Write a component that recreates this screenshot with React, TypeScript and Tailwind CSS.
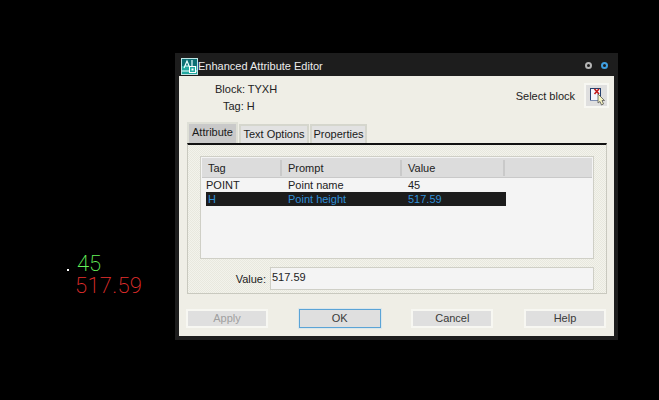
import React from "react";

const hatch =
  "bg-[conic-gradient(#e8e8de_25%,#f3f3ec_0_50%,#e8e8de_0_75%,#f3f3ec_0)] bg-[length:2px_2px]";

function AppIcon() {
  return (
    <svg width="17" height="17" viewBox="0 0 17 17" className="shrink-0">
      <rect x="0.5" y="0.5" width="16" height="16" fill="#22a8a0" stroke="#bfe5e5" />
      <rect x="1" y="1" width="15" height="7" fill="#0c6f74" />
      <path d="M3 10 L6 3 L9 10 M4 8 H8" fill="none" stroke="#e8ffff" strokeWidth="1.2" />
      <path d="M11 2 V9 H15" fill="none" stroke="#e8ffff" strokeWidth="1.2" />
      <path d="M1 13 H16" stroke="#e8ffff" />
      <rect x="8.5" y="8.5" width="6" height="6" fill="#22a8a0" stroke="#fff" />
      <rect x="10.5" y="10.5" width="2" height="2" fill="#fff" />
    </svg>
  );
}

function SelectIcon() {
  return (
    <svg width="21" height="21" viewBox="0 0 21 21">
      <rect x="4.5" y="3.5" width="10" height="12" fill="#f4f6fb" stroke="#26416f" />
      <path d="M4 15.5 H16" stroke="#7c8db0" />
      <path d="M8.5 4 L13 9 M13 4 L8.5 9" stroke="#c01818" strokeWidth="1.6" />
      <path d="M12 9 V18 L14 16.5 L15.5 20 L17.5 19 L16 15.5 H18.5 Z" fill="#f6f4c0" stroke="#555" strokeWidth="0.8" />
    </svg>
  );
}

function Tab({ label, active, w }: { label: string; active?: boolean; w: string }) {
  return active ? (
    <div className={`${w} h-[21px] pb-[3px] border-2 border-b-0 border-[#dedfd6] bg-[#c9c9c9] text-[#1a1a1a] flex items-center justify-center`}>
      {label}
    </div>
  ) : (
    <div className={`${w} h-[19px] border-2 border-b-0 border-[#d5d6cd] bg-[#e2e2e2] text-[#1a1a1a] flex items-center justify-center`}>
      {label}
    </div>
  );
}

function Btn({ label, cls }: { label: string; cls: string }) {
  return (
    <div className={`w-[82px] h-[19px] bg-[#dfdfdf] flex items-center justify-center ${cls}`}>
      {label}
    </div>
  );
}

function Head({ label, w }: { label: string; w: string }) {
  return (
    <div className={`${w} h-full flex items-center justify-between pl-[6px]`}>
      <span>{label}</span>
      <span className="w-[2px] h-[16px] bg-[#c9c9c9]" />
    </div>
  );
}

export default function App() {
  return (
    <div
      className="relative w-[659px] h-[400px] bg-black overflow-hidden text-[11px] text-[#222] leading-none"
      style={{ fontFamily: '"Liberation Sans", Arial, sans-serif' }}
    >
      <div className="absolute left-[67px] top-[269px] w-[2px] h-[2px] bg-white" />
      <div
        className="absolute left-[77px] top-[254px] text-[22px] leading-[20px] text-[#66f25a] font-extralight"
        style={{ fontFamily: "Roboto, sans-serif" }}
      >
        45
      </div>
      <div
        className="absolute left-[75px] top-[276px] text-[22px] leading-[20px] tracking-[0.3px] text-[#e8302e] font-extralight"
        style={{ fontFamily: "Roboto, sans-serif" }}
      >
        517.59
      </div>

      <div className="absolute left-[175px] top-[53px] w-[443px] h-[287px] bg-[#1d1d1d] flex flex-col px-[4px] pb-[4px]">
        <div className="h-[23px] shrink-0 flex items-center pt-[4px] pl-[2px] pr-[6px] text-[#ececec]">
          <AppIcon />
          <span className="flex-1">Enhanced Attribute Editor</span>
          <span className="w-[7px] h-[7px] rounded-full border-2 border-[#b5b5b5] mr-[9px] mb-[2px]" />
          <span className="w-[7px] h-[7px] rounded-full border-2 border-[#3f9fe0] mb-[2px]" />
        </div>

        <div className="flex-1 bg-[#efeee6] flex flex-col">
          <div className="h-[46px] shrink-0 flex justify-between pr-[5px]">
            <div className="pl-[36px] pt-[7px]">
              <div className="flex h-[12px] items-center"><span>Block: TYXH</span></div>
              <div className="flex h-[12px] items-center mt-[5px] pl-[8px]"><span>Tag: H</span></div>
            </div>
            <div className="flex items-start pt-[7px]">
              <span className="mt-[8px] mr-[9px]">Select block</span>
              <div className="w-[25px] h-[25px] border-2 border-[#f7f7f2] bg-[#dfdfdf] flex items-center justify-center">
                <SelectIcon />
              </div>
            </div>
          </div>

          <div className="ml-[8px] mr-[7px] flex items-end h-[21px] shrink-0 gap-[1px]">
            <Tab label="Attribute" active w="w-[51px]" />
            <Tab label="Text Options" w="w-[70px]" />
            <Tab label="Properties" w="w-[57px]" />
          </div>

          <div className={`ml-[8px] mr-[7px] h-[151px] shrink-0 border-t-2 border-t-[#111] border-x border-b border-x-[#c9c9bf] border-b-[#c9c9bf] ${hatch} pl-[12px] pr-[12px] pt-[11px]`}>
            <div className="h-[103px] border border-[#cfcfc6] bg-[#f4f4f4] flex flex-col pt-px pl-px pr-px">
              <div className="h-[20px] shrink-0 bg-[#dcdcdc] border-b border-[#c9c9c9] pt-px flex items-center">
                <Head label="Tag" w="w-[80px]" />
                <Head label="Prompt" w="w-[120px]" />
                <Head label="Value" w="w-[103px]" />
              </div>
              <div className="h-[14px] shrink-0 flex items-center pl-[4px]">
                <span className="w-[82px]">POINT</span>
                <span className="w-[120px]">Point name</span>
                <span>45</span>
              </div>
              <div className="ml-[4px] w-[300px] h-[14px] shrink-0 bg-[#1c1c1c] text-[#2f8fd8] flex items-center">
                <span className="w-[82px] pl-[2px]">H</span>
                <span className="w-[120px]">Point height</span>
                <span>517.59</span>
              </div>
            </div>
            <div className="flex items-center mt-[8px]">
              <span className="w-[70px] text-right pr-[4px] pt-[2px]">Value:</span>
              <div className="flex-1 h-[23px] border border-[#cfcfc6] bg-[#f4f4f4] pl-[1px] pt-[4px]">517.59</div>
            </div>
          </div>

          <div className="flex justify-between ml-[7px] mr-[8px] mt-[15px]">
            <Btn label="Apply" cls="border-2 border-[#f7f7f2] text-[#a0a0a0]" />
            <Btn label="OK" cls="border border-[#5ba4d6] ring-1 ring-[#dbe6ea] text-[#3a3a3a]" />
            <Btn label="Cancel" cls="border-2 border-[#f7f7f2] text-[#3a3a3a]" />
            <Btn label="Help" cls="border-2 border-[#f7f7f2] text-[#3a3a3a]" />
          </div>
        </div>
      </div>
    </div>
  );
}
